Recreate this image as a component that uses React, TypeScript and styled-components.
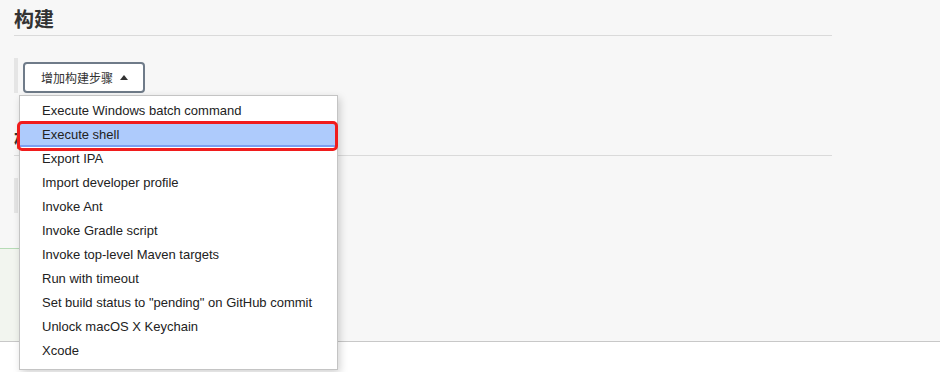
import styled, { createGlobalStyle } from 'styled-components';

const GlobalStyle = createGlobalStyle`
  html, body {
    margin: 0;
    padding: 0;
    background: #ffffff;
  }
  body {
    font-family: "Liberation Sans", "Noto Sans CJK SC", Arial, sans-serif;
    color: #333;
  }
`;

const steps = [
  'Execute Windows batch command',
  'Execute shell',
  'Export IPA',
  'Import developer profile',
  'Invoke Ant',
  'Invoke Gradle script',
  'Invoke top-level Maven targets',
  'Run with timeout',
  'Set build status to "pending" on GitHub commit',
  'Unlock macOS X Keychain',
  'Xcode',
];

const App = () => {
  return (
    <>
      <GlobalStyle />
      <Page>
        <Main>
          <SectionHeader>
            <Title>构建</Title>
          </SectionHeader>
          <StepBar>
            <DropdownWrap>
              <AddButton>
                增加构建步骤 <Caret $up />
              </AddButton>
              <Menu>
                {steps.map((s, i) => (
                  <MenuItem key={s} $active={i === 1}>
                    {s}
                  </MenuItem>
                ))}
              </Menu>
            </DropdownWrap>
          </StepBar>

          <SectionHeader $gap={27}>
            <Title>构建后操作</Title>
          </SectionHeader>
          <StepBar>
            <DropdownWrap>
              <AddButton>
                增加构建后操作步骤 <Caret />
              </AddButton>
            </DropdownWrap>
          </StepBar>

          <SaveBar />
        </Main>
        <Footer />
      </Page>
    </>
  );
};

export default App;

const Page = styled.div`
  width: 940px;
  height: 372px;
  overflow: hidden;
  display: flex;
  flex-direction: column;
`;

const Main = styled.div`
  background: #f7f7f7;
  height: 341px;
  padding: 0 108px 0 14px;
  box-sizing: border-box;
  display: flex;
  flex-direction: column;
`;

const SectionHeader = styled.div<{ $gap?: number }>`
  height: 36px;
  padding-top: 4px;
  box-sizing: border-box;
  margin-top: ${(p) => p.$gap ?? 0}px;
  border-bottom: 1px solid #dadada;
  display: flex;
  align-items: center;
  flex-shrink: 0;
`;

const Title = styled.h2`
  margin: 0;
  font-size: 20px;
  font-weight: 700;
  color: #333;
  line-height: 28px;
  white-space: nowrap;
`;

const StepBar = styled.div`
  margin-top: 22px;
  height: 35px;
  border-left: 4px solid #e5e5e5;
  padding: 4px 0 0 5px;
  box-sizing: border-box;
  flex-shrink: 0;
`;

const DropdownWrap = styled.div`
  position: relative;
  display: inline-block;
`;

const AddButton = styled.button`
  height: 31px;
  width: 122px;
  padding: 0 0 0 16px;
  box-sizing: border-box;
  display: flex;
  align-items: center;
  gap: 6px;
  background: #ffffff;
  border: 2px solid #6f7b89;
  border-radius: 4px;
  font-family: "Liberation Sans", "Noto Sans CJK SC", sans-serif;
  font-size: 12px;
  color: #333;
  white-space: nowrap;
`;

const Caret = styled.span<{ $up?: boolean }>`
  width: 0;
  height: 0;
  border-left: 4px solid transparent;
  border-right: 4px solid transparent;
  ${(p) => (p.$up ? 'border-bottom: 5px solid #333;' : 'border-top: 5px solid #333;')}
  margin-left: 1px;
  margin-top: -1px;
`;

const Menu = styled.ul`
  position: absolute;
  left: -4px;
  top: 33px;
  width: 319px;
  margin: 0;
  padding: 3px 0 6px;
  list-style: none;
  background: #ffffff;
  border: 1px solid #c4c4c4;
  box-sizing: border-box;
  box-shadow: 2px 3px 8px rgba(0, 0, 0, 0.18);
  z-index: 10;
`;

const MenuItem = styled.li<{ $active?: boolean }>`
  position: relative;
  height: 24px;
  line-height: 24px;
  padding-left: 22px;
  font-size: 13px;
  color: #222;
  white-space: nowrap;
  background: ${(p) => (p.$active ? '#aecbfc' : 'transparent')};
  box-shadow: ${(p) => (p.$active ? 'inset 0 -2px 0 #7c9ff0' : 'none')};

  &::after {
    content: '';
    display: ${(p) => (p.$active ? 'block' : 'none')};
    position: absolute;
    left: -3px;
    right: -1px;
    top: -2px;
    bottom: -4px;
    border: 3px solid #f01c1c;
    border-radius: 5px;
  }
`;

const SaveBar = styled.div`
  margin: 35px 0 0 -14px;
  width: 320px;
  flex: 1;
  background: #f2f5ef;
  border-top: 1px solid #b6dbb6;
`;

const Footer = styled.div`
  flex: 1;
  background: #ffffff;
  border-top: 1px solid #c8c8c8;
`;
